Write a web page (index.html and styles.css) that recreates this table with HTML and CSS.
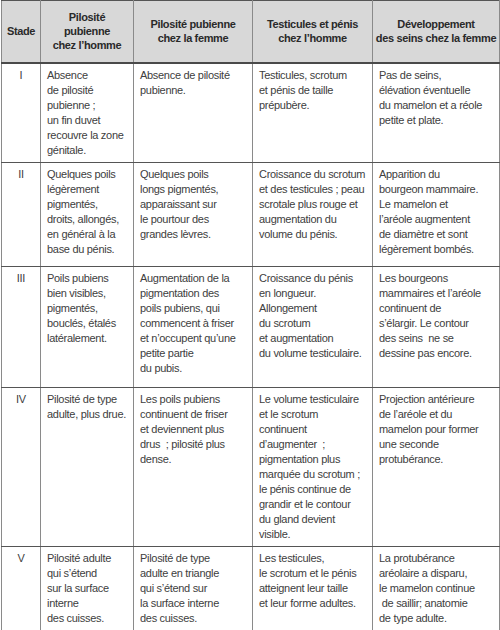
FILE: index.html
```html
<!DOCTYPE html>
<html lang="fr">
<head>
<meta charset="utf-8">
<title>Stades de Tanner</title>
<link rel="stylesheet" href="styles.css">
</head>
<body>
<table class="tanner">
  <colgroup>
    <col class="c-stade"><col class="c-a"><col class="c-b"><col class="c-c"><col class="c-d">
  </colgroup>
  <thead>
    <tr class="head">
      <th>Stade</th>
      <th>Pilosité<br>pubienne<br>chez l’homme</th>
      <th>Pilosité pubienne<br>chez la femme</th>
      <th>Testicules et pénis<br>chez l’homme</th>
      <th>Développement<br>des seins chez la femme</th>
    </tr>
  </thead>
  <tbody>
    <tr class="r1">
      <td class="stade">I</td>
      <td>Absence<br>de pilosité<br>pubienne ;<br>un fin duvet<br>recouvre la zone<br>génitale.</td>
      <td>Absence de pilosité<br>pubienne.</td>
      <td>Testicules, scrotum<br>et pénis de taille<br>prépubère.</td>
      <td>Pas de seins,<br>élévation éventuelle<br>du mamelon et a réole<br>petite et plate.</td>
    </tr>
    <tr class="r2">
      <td class="stade">II</td>
      <td>Quelques poils<br>légèrement<br>pigmentés,<br>droits, allongés,<br>en général à la<br>base du pénis.</td>
      <td>Quelques poils<br>longs pigmentés,<br>apparaissant sur<br>le pourtour des<br>grandes lèvres.</td>
      <td>Croissance du scrotum<br>et des testicules ; peau<br>scrotale plus rouge et<br>augmentation du<br>volume du pénis.</td>
      <td>Apparition du<br>bourgeon mammaire.<br>Le mamelon et<br>l’aréole augmentent<br>de diamètre et sont<br>légèrement bombés.</td>
    </tr>
    <tr class="r3">
      <td class="stade">III</td>
      <td>Poils pubiens<br>bien visibles,<br>pigmentés,<br>bouclés, étalés<br>latéralement.</td>
      <td>Augmentation de la<br>pigmentation des<br>poils pubiens, qui<br>commencent à friser<br>et n’occupent qu’une<br>petite partie<br>du pubis.</td>
      <td>Croissance du pénis<br>en longueur.<br>Allongement<br>du scrotum<br>et augmentation<br>du volume testiculaire.</td>
      <td>Les bourgeons<br>mammaires et l’aréole<br>continuent de<br>s’élargir. Le contour<br>des seins &nbsp;ne se<br>dessine pas encore.</td>
    </tr>
    <tr class="r4">
      <td class="stade">IV</td>
      <td>Pilosité de type<br>adulte, plus drue.</td>
      <td>Les poils pubiens<br>continuent de friser<br>et deviennent plus<br>drus &nbsp;; pilosité plus<br>dense.</td>
      <td>Le volume testiculaire<br>et le scrotum<br>continuent<br>d’augmenter &nbsp;;<br>pigmentation plus<br>marquée du scrotum ;<br>le pénis continue de<br>grandir et le contour<br>du gland devient<br>visible.</td>
      <td>Projection antérieure<br>de l’aréole et du<br>mamelon pour former<br>une seconde<br>protubérance.</td>
    </tr>
    <tr class="r5">
      <td class="stade">V</td>
      <td>Pilosité adulte<br>qui s’étend<br>sur la surface<br>interne<br>des cuisses.</td>
      <td>Pilosité de type<br>adulte en triangle<br>qui s’étend sur<br>la surface interne<br>des cuisses.</td>
      <td>Les testicules,<br>le scrotum et le pénis<br>atteignent leur taille<br>et leur forme adultes.</td>
      <td>La protubérance<br>aréolaire a disparu,<br>le mamelon continue<br>&nbsp;de saillir; anatomie<br>de type adulte.</td>
    </tr>
  </tbody>
</table>
</body>
</html>
```

FILE: styles.css
```css
html, body {
  margin: 0;
  padding: 0;
  background: #ffffff;
}

body {
  font-family: "Liberation Sans", Arial, sans-serif;
  color: #404040;
}

.tanner {
  border-collapse: collapse;
  table-layout: fixed;
  width: 498px;
  margin: 0 1px;
}

.c-stade { width: 39px; }
.c-a { width: 93px; }
.c-b { width: 119px; }
.c-c { width: 120px; }
.c-d { width: 127px; }

.tanner th,
.tanner td {
  border-left: 1px solid #8a8a8a;
  border-right: 1px solid #8a8a8a;
  border-top: 1.5px solid #555555;
  border-bottom: 1.5px solid #555555;
  white-space: nowrap;
  overflow: hidden;
}

.head {
  height: 62px;
}

.head th {
  background: #d8d8d8;
  color: #2a2a2a;
  font-size: 11px;
  font-weight: bold;
  letter-spacing: -0.35px;
  line-height: 14px;
  padding: 0 2px;
  text-align: center;
  vertical-align: middle;
  border-bottom: 2px solid #4a4a4a;
}

.tanner td {
  font-size: 11px;
  letter-spacing: -0.3px;
  line-height: 15px;
  padding: 4px 4px 4px 6px;
  vertical-align: top;
  text-align: left;
}

.tanner td.stade {
  text-align: center;
  padding-left: 2px;
  padding-right: 2px;
}

.r1 { height: 100px; }
.r2 { height: 104px; }
.r3 { height: 121px; }
.r4 { height: 159px; }
.r5 { height: 84px; }
```
